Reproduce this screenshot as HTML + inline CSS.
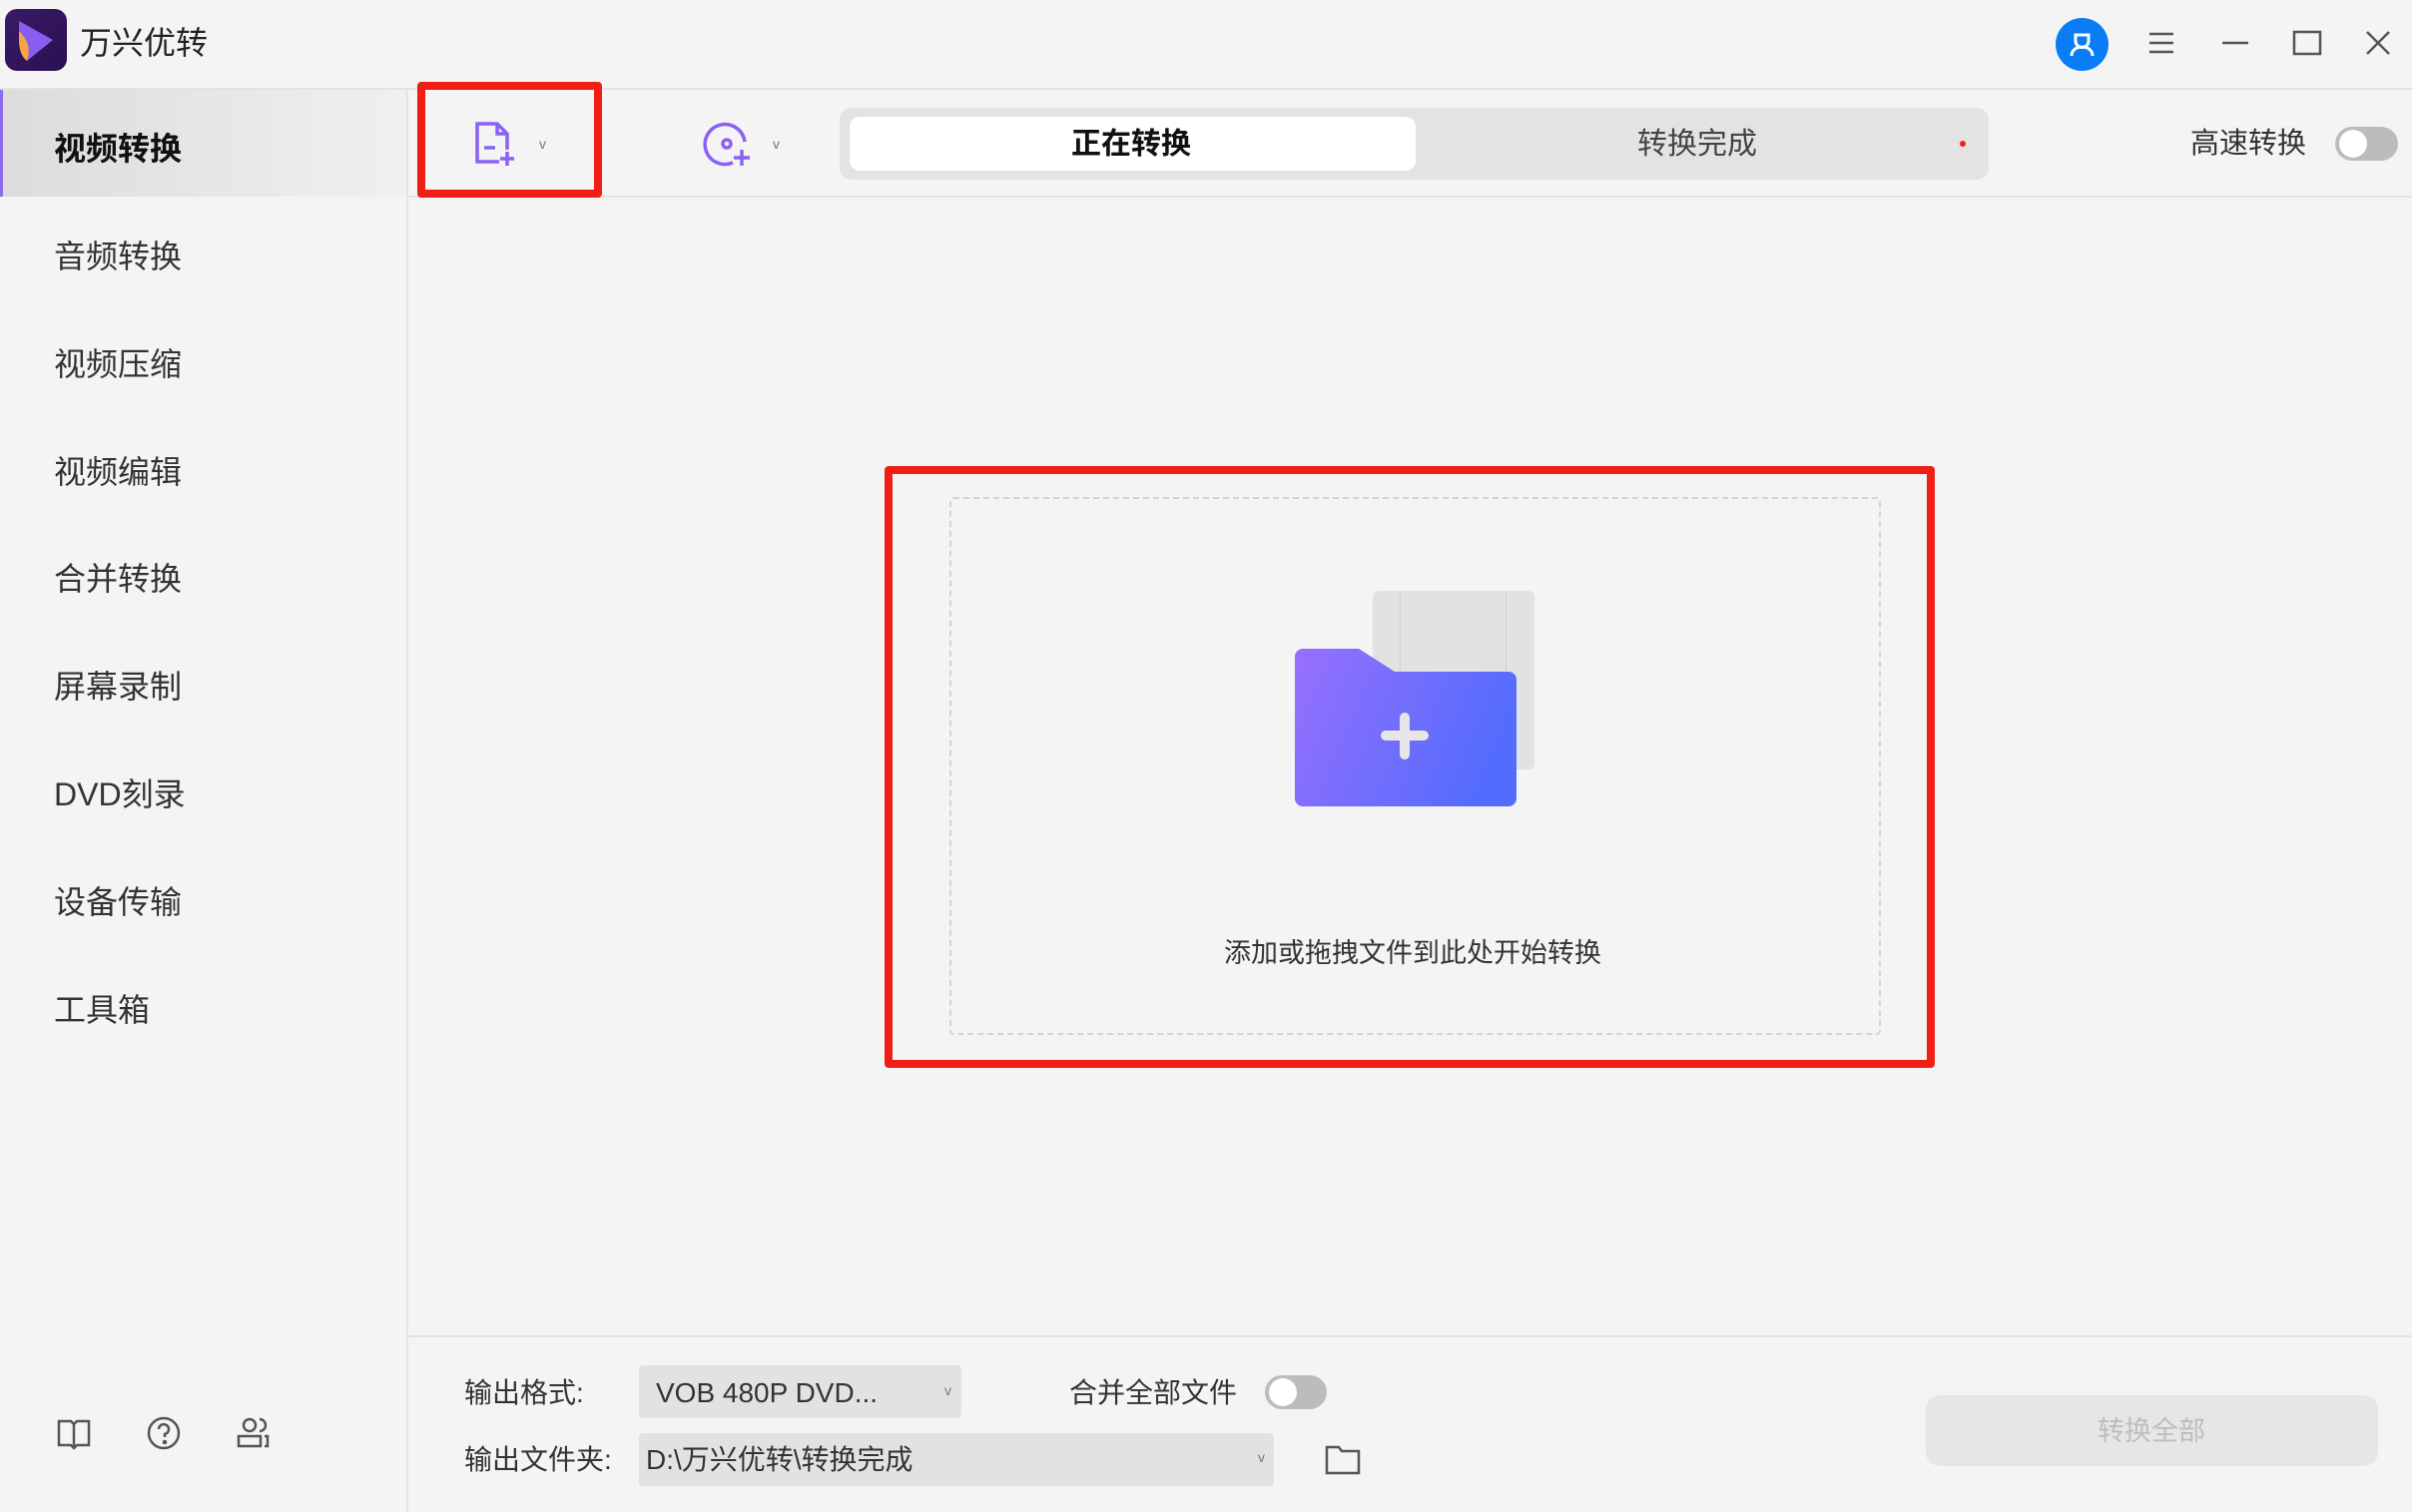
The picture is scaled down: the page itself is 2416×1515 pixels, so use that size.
<!DOCTYPE html>
<html><head><meta charset="utf-8"><style>
*{margin:0;padding:0;box-sizing:border-box}
body{width:2416px;height:1515px;background:#f4f4f4;font-family:"Liberation Sans","Noto Sans CJK SC",sans-serif;color:#333;position:relative;overflow:hidden}
.a{position:absolute}
.t{white-space:nowrap;line-height:1}
.nav{left:54px;font-size:32px;color:#333}
</style></head><body>
<div class="a" style="left:5px;top:9px;width:62px;height:62px;border-radius:12px;background:linear-gradient(135deg,#3a1a6a,#2a1050)"></div>
<svg class="a" style="left:5px;top:9px" width="62" height="62" viewBox="0 0 62 62"><path d="M14 12 L48 31 L22 52 Q14 46 14 30Z" fill="#8a5cf0"/><path d="M14 22 Q28 36 22 52 Q14 46 14 30Z" fill="#f6a540"/></svg>
<div class="a t" style="left:80px;top:27px;font-size:32px;color:#222">万兴优转</div>
<div class="a" style="left:2059px;top:18px;width:53px;height:53px;border-radius:50%;background:#0a7cf5"></div>
<svg class="a" style="left:2059px;top:18px" width="53" height="53" viewBox="0 0 53 53" fill="none" stroke="#fff" stroke-width="3"><path d="M20 17h13v6a6.5 6.5 0 0 1-13 0z"/><path d="M16 38c0-6 5-9 10.5-9s10.5 3 10.5 9"/></svg>
<svg class="a" style="left:2150px;top:30px" width="30" height="26"><path d="M3 4h24M3 13h24M3 22h24" stroke="#555" stroke-width="2.5"/></svg>
<svg class="a" style="left:2224px;top:30px" width="30" height="26"><path d="M2 13h26" stroke="#555" stroke-width="2.5"/></svg>
<svg class="a" style="left:2296px;top:29px" width="30" height="28"><rect x="2" y="3" width="26" height="22" fill="none" stroke="#555" stroke-width="2.5"/></svg>
<svg class="a" style="left:2368px;top:29px" width="28" height="28"><path d="M3 3L25 25M25 3L3 25" stroke="#555" stroke-width="2.5"/></svg>
<div class="a" style="left:0;top:88px;width:2416px;height:2px;background:#e2e2e2"></div>
<div class="a" style="left:407px;top:89px;width:2px;height:1426px;background:#e4e4e4"></div>
<div class="a" style="left:0;top:90px;width:407px;height:107px;background:linear-gradient(90deg,#dcdcdc,#f0f0f0);border-left:3px solid #8b6cf0"></div>
<div class="a t nav" style="top:133px;font-weight:bold;color:#111">视频转换</div>
<div class="a t nav" style="top:241px">音频转换</div>
<div class="a t nav" style="top:349px">视频压缩</div>
<div class="a t nav" style="top:457px">视频编辑</div>
<div class="a t nav" style="top:564px">合并转换</div>
<div class="a t nav" style="top:672px">屏幕录制</div>
<div class="a t nav" style="top:780px">DVD刻录</div>
<div class="a t nav" style="top:888px">设备传输</div>
<div class="a t nav" style="top:996px">工具箱</div>
<svg class="a" style="left:56px;top:1420px" width="36" height="34" fill="none" stroke="#555" stroke-width="2.5"><path d="M3 4h12l3 3 3-3h12v24H21l-3 3-3-3H3z M18 7v24"/></svg>
<svg class="a" style="left:146px;top:1418px" width="36" height="36" fill="none" stroke="#555" stroke-width="2.5"><circle cx="18" cy="18" r="15"/><path d="M13 14a5 5 0 1 1 6 5v3"/><circle cx="19" cy="27" r="1" fill="#555"/></svg>
<svg class="a" style="left:236px;top:1418px" width="36" height="36" fill="none" stroke="#555" stroke-width="2.5"><circle cx="14" cy="10" r="6"/><path d="M24 4a6 6 0 0 1 0 12"/><rect x="3" y="21" width="22" height="10"/><path d="M29 21h3v10h-3"/></svg>
<div class="a" style="left:409px;top:196px;width:2007px;height:2px;background:#e2e2e2"></div>
<div class="a" style="left:418px;top:82px;width:185px;height:116px;border:8px solid #f01e14;border-radius:4px"></div>
<svg class="a" style="left:474px;top:120px" width="48" height="48" fill="none" stroke="#8a62f5" stroke-width="3.5"><path d="M26 42H4V4h20l10 10v16"/><path d="M24 4v10h10"/><path d="M11 28h11M34 32v14M27 39h14"/></svg>
<div class="a t" style="left:540px;top:137px;font-size:14px;color:#777">v</div>
<svg class="a" style="left:704px;top:120px" width="50" height="50" fill="none" stroke="#8a62f5" stroke-width="3.5"><path d="M30 43A20 20 0 1 1 42 22"/><circle cx="24" cy="24" r="4"/><path d="M39 30v16M31 38h16"/></svg>
<div class="a t" style="left:774px;top:137px;font-size:14px;color:#777">v</div>
<div class="a" style="left:841px;top:108px;width:1151px;height:72px;background:#e3e3e3;border-radius:12px"></div>
<div class="a" style="left:851px;top:117px;width:567px;height:54px;background:#fff;border-radius:10px"></div>
<div class="a t" style="left:1073px;top:130px;font-size:30px;font-weight:bold;color:#111">正在转换</div>
<div class="a t" style="left:1640px;top:130px;font-size:30px;color:#444">转换完成</div>
<div class="a" style="left:1963px;top:141px;width:6px;height:6px;border-radius:50%;background:#f02020"></div>
<div class="a t" style="left:2194px;top:130px;font-size:29px;color:#333">高速转换</div>
<div class="a" style="left:2339px;top:127px;width:63px;height:34px;border-radius:17px;background:#bcbcbc"></div>
<div class="a" style="left:2343px;top:130px;width:28px;height:28px;border-radius:50%;background:#fff"></div>
<div class="a" style="left:886px;top:467px;width:1052px;height:603px;border:8px solid #f01e14;border-radius:4px"></div>
<div class="a" style="left:951px;top:498px;width:933px;height:539px;border:2px dashed #d4d4d4;border-radius:4px"></div>
<div class="a" style="left:1375px;top:592px;width:162px;height:179px;background:#e2e2e2;border-radius:6px"></div>
<div class="a" style="left:1402px;top:592px;width:1px;height:179px;background:#d2d2d2"></div>
<div class="a" style="left:1508px;top:592px;width:1px;height:179px;background:#d2d2d2"></div>
<svg class="a" style="left:1297px;top:650px" width="222" height="158" viewBox="0 0 222 158"><defs><linearGradient id="g" x1="0" y1="0" x2="1" y2="0.3"><stop offset="0" stop-color="#9770fd"/><stop offset="1" stop-color="#546cfd"/></linearGradient></defs><path d="M8 0H64L100 23H214a8 8 0 0 1 8 8V150a8 8 0 0 1-8 8H8a8 8 0 0 1-8-8V8a8 8 0 0 1 8-8z" fill="url(#g)"/><path d="M110 69V106M91 87H129" stroke="#e6e6e6" stroke-width="10" stroke-linecap="round"/></svg>
<div class="a t" style="left:1226px;top:942px;font-size:27px;color:#333">添加或拖拽文件到此处开始转换</div>
<div class="a" style="left:409px;top:1338px;width:2007px;height:2px;background:#e2e2e2"></div>
<div class="a t" style="left:465px;top:1382px;font-size:28px;color:#333">输出格式:</div>
<div class="a" style="left:640px;top:1368px;width:323px;height:53px;background:#e2e2e2;border-radius:4px"></div>
<div class="a t" style="left:657px;top:1382px;font-size:28px;color:#333">VOB 480P DVD...</div>
<div class="a t" style="left:946px;top:1386px;font-size:14px;color:#777">v</div>
<div class="a t" style="left:1071px;top:1382px;font-size:28px;color:#333">合并全部文件</div>
<div class="a" style="left:1267px;top:1378px;width:62px;height:34px;border-radius:17px;background:#bcbcbc"></div>
<div class="a" style="left:1271px;top:1381px;width:28px;height:28px;border-radius:50%;background:#fff"></div>
<div class="a t" style="left:465px;top:1449px;font-size:28px;color:#333">输出文件夹:</div>
<div class="a" style="left:640px;top:1436px;width:636px;height:53px;background:#e2e2e2;border-radius:4px"></div>
<div class="a t" style="left:647px;top:1449px;font-size:28px;color:#333">D:\万兴优转\转换完成</div>
<div class="a t" style="left:1260px;top:1453px;font-size:14px;color:#777">v</div>
<svg class="a" style="left:1327px;top:1448px" width="36" height="30" fill="none" stroke="#555" stroke-width="2.5"><path d="M2 2h12l3 4h17v22H2z"/></svg>
<div class="a" style="left:1929px;top:1398px;width:453px;height:71px;background:#e6e6e6;border-radius:14px"></div>
<div class="a t" style="left:2101px;top:1421px;font-size:27px;color:#bdbdbd">转换全部</div>
</body></html>
